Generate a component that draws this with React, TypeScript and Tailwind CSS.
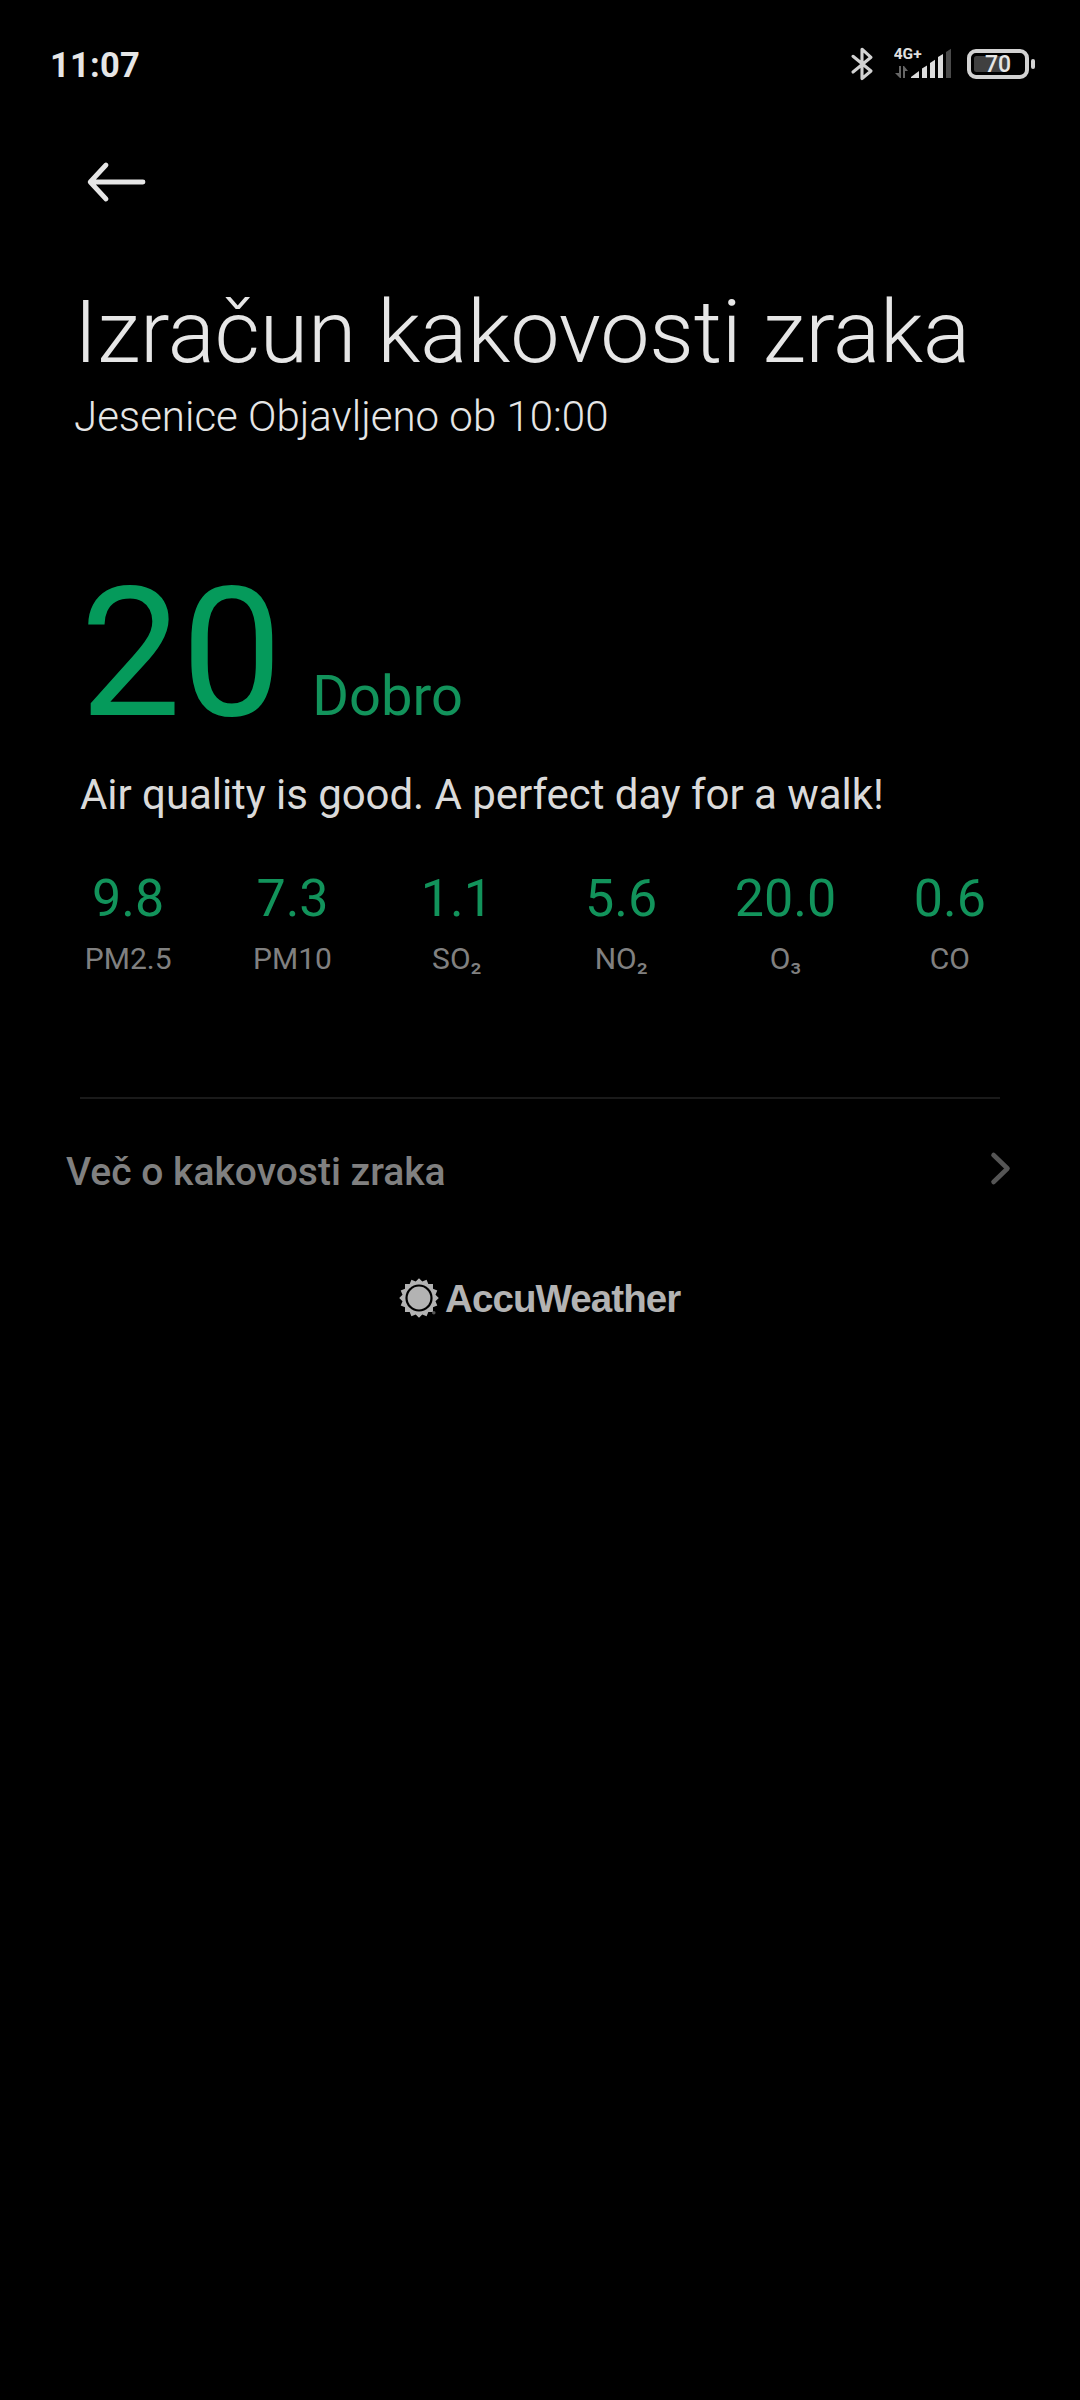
import React from 'react';

const POLLUTANTS = [
  { id: 'pm25', value: '9.8', label: 'PM2.5' },
  { id: 'pm10', value: '7.3', label: 'PM10' },
  { id: 'so2', value: '1.1', label: 'SO₂' },
  { id: 'no2', value: '5.6', label: 'NO₂' },
  { id: 'o3', value: '20.0', label: 'O₃' },
  { id: 'co', value: '0.6', label: 'CO' },
];

const IconBluetooth = () => (
  <svg width="24" height="36" viewBox="0 0 24 36" fill="none" stroke="#d2d2d2" strokeWidth="3.1" strokeLinejoin="round" strokeLinecap="round">
    <path d="M3 10.3 21 25 12 32.6V3.2L21 11.3 3 26" />
  </svg>
);

const IconSignal = () => (
  <svg width="60" height="40" viewBox="0 -6 60 40" fill="#dcdcdc">
    <text x="-0.3" y="11.7" className="font-['Roboto',sans-serif] text-[15.5px] font-bold" fill="#e0e0e0">4G+</text>
    <g fill="#666">
      <path d="M5 19h2v12H6L1 26h4z" />
      <path d="M9 31V19h1l4 5h-3v7z" />
    </g>
    <path d="M17 31v-1l8-6v7z" />
    <path d="M28 31V21.5l5-3V31z" />
    <path d="M36 31V16l5-3.3V31z" />
    <path d="M44 31V10l5-3V31z" />
    <path d="M52 31V5l5-3.2V31z" fill="#4a4a4a" />
  </svg>
);

const IconBattery = ({ level }: { level: number }) => (
  <svg width="70" height="32" viewBox="0 0 70 32">
    <rect x="2" y="3" width="58" height="26" rx="7" fill="none" stroke="#d2d2d2" strokeWidth="4" />
    <rect x="7" y="8" width={level * 0.48} height="16" rx="2.5" fill="#404040" />
    <rect x="64" y="11" width="4" height="10" rx="2" fill="#d2d2d2" />
    <text x="31" y="24.3" textAnchor="middle" className="font-['Roboto',sans-serif] text-[23px] font-medium" fill="#e6e6e6">{level}</text>
  </svg>
);

const IconBack = () => (
  <svg width="60" height="42" viewBox="0 0 60 42" fill="none" stroke="#e6e6e6" strokeWidth="4.8" strokeLinecap="round" strokeLinejoin="round">
    <path d="M20 4 4.2 21 20 38M5 21h52" />
  </svg>
);

const IconChevron = () => (
  <svg width="22" height="36" viewBox="0 0 22 36" fill="none" stroke="#555" strokeWidth="4.6" strokeLinecap="round" strokeLinejoin="round">
    <path d="M3.5 5 17.5 18.5 3.5 32" />
  </svg>
);

// 16 rays around the ring
const RAYS = Array.from({ length: 32 }, (_, i) => {
  const r = i % 2 === 0 ? 19.8 : 16.8;
  const a = (i * Math.PI) / 16 - Math.PI / 2;
  return `${(20 + r * Math.cos(a)).toFixed(2)},${(20 + r * Math.sin(a)).toFixed(2)}`;
}).join(' ');

const IconSun = () => (
  <svg width="40" height="40" viewBox="0 0 40 40" fill="#b3b3b3">
    <polygon points={RAYS} />
    <circle cx="20" cy="20" r="13.6" fill="#000" />
    <circle cx="20" cy="20" r="11.4" />
    <circle cx="34.8" cy="34.8" r="1.8" fill="#555" />
  </svg>
);

export default function App() {
  return (
    <div className="min-h-[2400px] w-[1080px] bg-black font-['Roboto',sans-serif] text-[#e6e6e6]">
      <header className="flex h-[128px] justify-between pl-[50px] pr-[43px]">
        <span className="mt-[45px] text-[34.5px] leading-[40px] font-bold tracking-[0.2px]">11:07</span>
        <div className="flex pt-[47px]">
          <div className="-mt-px mr-[20px]"><IconBluetooth /></div>
          <div className="-mt-[6px] mr-[13px]"><IconSignal /></div>
          <div className="mt-px"><IconBattery level={70} /></div>
        </div>
      </header>

      <button className="mt-[33px] ml-[86px] block">
        <IconBack />
      </button>

      <h1 className="mt-[77px] pl-[74px] text-[88px] leading-[104px] font-light tracking-[-0.2px] whitespace-nowrap">Izračun kakovosti zraka</h1>
      <p className="mt-[8px] pl-[74px] text-[42px] leading-[50px] font-light">Jesenice Objavljeno ob 10:00</p>

      <div className="mt-[122px] flex items-baseline pl-[80px] text-[#059a5b]">
        <span className="text-[180px] leading-[180px]">20</span>
        <span className="ml-[30px] text-[56px] leading-[64px] text-[#12935b]">Dobro</span>
      </div>

      <p className="mt-[26px] pl-[80px] text-[42px] leading-[50px] tracking-[-0.05px] text-[#dadada]">Air quality is good. A perfect day for a walk!</p>

      <div className="mt-[49px] ml-[46px] grid w-[986px] grid-cols-6 text-center">
        {POLLUTANTS.map(item => (
          <div key={item.id}>
            <div className="text-[52px] leading-[60px] text-[#12935b]">{item.value}</div>
            <div className="mt-[12px] text-[30px] leading-[36px] text-[#808080]">{item.label}</div>
          </div>
        ))}
      </div>

      <div className="mt-[120px] ml-[80px] h-[2px] w-[920px] bg-[#1a1a1a]" />

      <a className="mt-[50px] flex h-[46px] justify-between pr-[68px] pl-[66px]">
        <span className="text-[39px] leading-[46px] font-medium text-[#808080]">Več o kakovosti zraka</span>
        <span className="mt-[1px]"><IconChevron /></span>
      </a>

      <footer className="mt-[82px] flex h-[44px] pl-[399px] text-[#b3b3b3]">
        <span className="mt-[1px]"><IconSun /></span>
        <span className="ml-[6px] font-['Liberation_Sans',sans-serif] text-[38.5px] leading-[44px] font-bold tracking-[-0.9px]">AccuWeather</span>
      </footer>
    </div>
  );
}
